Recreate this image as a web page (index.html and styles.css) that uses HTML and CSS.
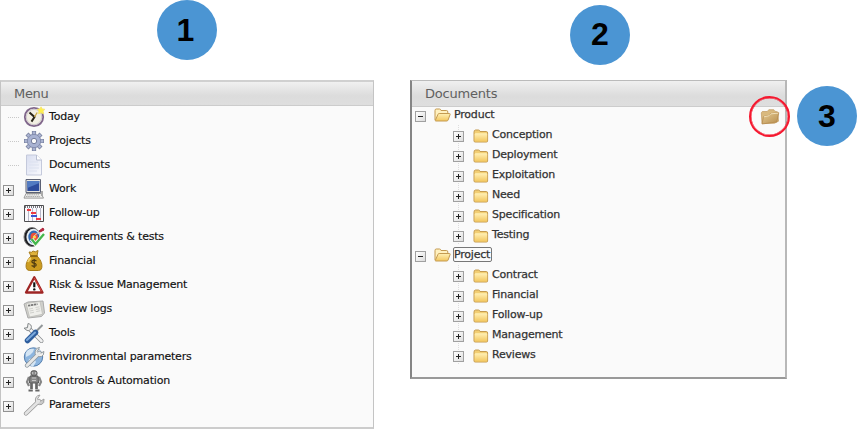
FILE: index.html
```html
<!DOCTYPE html>
<html lang="en">
<head>
<meta charset="utf-8">
<title>Menu and documents</title>
<link rel="stylesheet" href="styles.css">
</head>
<body>
<svg class="defs" aria-hidden="true">
  <defs>
    <linearGradient id="gold" x1="0" y1="0" x2="0" y2="1"><stop offset="0" stop-color="#fff0b5"/><stop offset="1" stop-color="#f3c75f"/></linearGradient>
    <linearGradient id="tan" x1="0" y1="0" x2="1" y2="1"><stop offset="0" stop-color="#e6cb93"/><stop offset="1" stop-color="#b68d4e"/></linearGradient>
    <linearGradient id="steel" x1="0" y1="0" x2="1" y2="1"><stop offset="0" stop-color="#f8f8f8"/><stop offset="1" stop-color="#b9b9b9"/></linearGradient>
    <linearGradient id="paper" x1="0" y1="0" x2="1" y2="1"><stop offset="0" stop-color="#d9def0"/><stop offset="1" stop-color="#f8f9fd"/></linearGradient>
    <symbol id="folder" viewBox="0 0 16 14"><path d="M1 3.2Q1 1 2.5 1h3q1.2 0 1.5 1.5h6.3q1.3 0 1.3 1.5v8q0 1-1.2 1H2.2Q1 13 1 12z" fill="#f2ce73" stroke="#c49a50"/><path d="M1.7 5.2q0-.9 1-.9h10.7q.8 0 .8.9v6.4q0 .9-.9.9H2.7q-1 0-1-.9z" fill="url(#gold)"/></symbol>
    <symbol id="folder-open" viewBox="0 0 17 14"><path d="M1 12V2.6Q1 1 2.2 1h3.3Q6.7 1 7 2.5h5.6q1.2 0 1.2 1.5v2" fill="#fff1c0" stroke="#c49a50"/><path d="M1.2 12.7 4 6.3q.3-.8 1.2-.8h10.2q1 0 .7 1l-2 5.5q-.4 1-1.3 1H1.8z" fill="url(#gold)" stroke="#c49a50"/></symbol>
  </defs>
</svg>
<main class="page">
  <section class="column column-menu">
    <div class="badge badge-one">1</div>
    <div class="panel panel-menu">
      <h2 class="panel-title">Menu</h2>
      <ul class="menu">
        <li><i class="dots"></i><svg viewBox="0 0 22 22"><circle cx="11" cy="11" r="9.2" fill="#f2efe2" stroke="#80668b" stroke-width="1.8"/><circle cx="11" cy="11" r="7.7" fill="none" stroke="#cfc8cd"/><path d="M6.5 6.5 11.5 11l-3 4.6" fill="none" stroke="#282419" stroke-width="2"/><path d="m11.5 11 2.7-4.5" stroke="#c8a642" stroke-width="1.3"/><path d="m18 .8 1.2 2.2 2.5.2-1.6 2 .6 2.5L18 6.8l-2.5.9.5-2.6-1.7-1.9 2.6-.2z" fill="#fff04b" stroke="#f6e56f" stroke-width=".9"/></svg><span>Today</span></li>
        <li><i class="dots"></i><svg viewBox="0 0 22 22"><g stroke="#747d9c" stroke-width="4.2"><path d="M11 1v20M1 11h20M4 4l14 14M18 4 4 18"/></g><g stroke="#acb5d2" stroke-width="2.8"><path d="M11 1.6v18.8M1.6 11h18.8M4.5 4.5l13 13M17.5 4.5l-13 13"/></g><circle cx="11" cy="11" r="6.7" fill="#a8b2d2" stroke="#838cad"/><circle cx="11" cy="11" r="2.7" fill="#fafafa" stroke="#747d9c"/></svg><span>Projects</span></li>
        <li><i class="dots"></i><svg viewBox="0 0 22 22"><path d="M3.5 1h10l5 5v15h-15z" fill="url(#paper)" stroke="#c4c9db"/><path d="M13.5 1v5h5" fill="#fff" stroke="#b9bfd2"/><path d="M6 8h9M6 11h10M6 14h10M6 17h8" stroke="#dce1ef"/></svg><span>Documents</span></li>
        <li><i class="toggle plus"></i><svg viewBox="0 0 22 22"><path d="M3 1.5h14.5V14.5H3z" fill="#e7e7e3" stroke="#5b6174"/><path d="M4.3 3h12v10h-12z" fill="#2d4c9d"/><path d="M4.3 3h12v2L4.3 10z" fill="#527bc2"/><path d="M3 15.5h15l2.5 4.6H1z" fill="#ededeb" stroke="#999"/><path d="M4 16.8h12M3 18.5h14" stroke="#aaa" stroke-dasharray="1.5 .7"/><path d="M19 13v5" stroke="#aaa" stroke-width="2"/></svg><span>Work</span></li>
        <li><i class="toggle plus"></i><svg viewBox="0 0 22 22"><path d="M1.5 3.5h19v16h-19z" fill="#f9f9fc" stroke="#4e4e50"/><path d="M2 5h18" stroke="#77777d" stroke-width="2" stroke-dasharray="1 1"/><path d="M5.5 6v13M9.5 6v13M13.5 6v13M17.5 6v13" stroke="#b8b8c8"/><path d="M4 8h4M8 11h5M13 17h5" stroke="#ee3c42" stroke-width="2"/><path d="M8 14h6" stroke="#3853d2" stroke-width="2"/></svg><span>Follow-up</span></li>
        <li><i class="toggle plus"></i><svg viewBox="0 0 22 22"><ellipse cx="9" cy="11" rx="8" ry="9.5" fill="#1c1c20" stroke="#777"/><ellipse cx="10.3" cy="11" rx="6.9" ry="8.2" fill="#e4edf3"/><ellipse cx="10.8" cy="11" rx="5.5" ry="6.5" fill="#326bb6"/><ellipse cx="11.2" cy="11" rx="3.7" ry="4.3" fill="#eb5039"/><circle cx="11.4" cy="11" r="1.6" fill="#ffd94e"/><path d="m11 10 6-5" stroke="#ccc" stroke-width="1"/><path d="m16 5 4-3 1 2-4 2z" fill="#be263e" stroke="#aa2037"/><path d="m8.5 13 4 5 8.5-10" fill="none" stroke="#f7fff4" stroke-width="4"/><path d="m8.5 13 4 5 8.5-10" fill="none" stroke="#44b64c" stroke-width="2.3"/></svg><span>Requirements &amp; tests</span></li>
        <li><i class="toggle plus"></i><svg viewBox="0 0 22 22"><path d="M8 6C5 9 2.5 13 3.2 17.5q.5 3 3.3 3h9q3 0 3.3-3C19.5 13 17 9 14 6z" fill="#cc9c20" stroke="#a77b18"/><path d="m8 6-2-4q3 1 4-1 2 2 5-.5L14 6z" fill="#dfb23b" stroke="#a77b18"/><path d="M5 12q1-3 3-4" fill="none" stroke="#efd06e" stroke-width="2"/><path d="M7.5 6h7" stroke="#805c12" stroke-width="1.5"/><path d="M13.5 11q-2.5-1.7-4.2-.3-1.3 1.7 1.5 2.5 3.4.8 2 2.6-1.9 1.4-4.2-.2M11.2 9v9" fill="none" stroke="#4e3b11" stroke-width="1.2"/></svg><span>Financial</span></li>
        <li><i class="toggle plus"></i><svg viewBox="0 0 22 22"><path d="M11.3 3.2 19.5 18.5H3z" fill="#fff" stroke="#9e2524" stroke-width="2.3" stroke-linejoin="round"/><path d="M11.3 4 18.7 17.3" stroke="#d84b42"/><path d="M11.3 8.3v5" stroke="#111" stroke-width="2.2"/><circle cx="11.3" cy="15.4" r="1.2" fill="#111"/></svg><span>Risk &amp; Issue Management</span></li>
        <li><i class="toggle plus"></i><svg viewBox="0 0 22 22"><path d="m1 6 4-2 15-1 1.5 12-3 3.5L5 20z" fill="#d1d1cc" stroke="#aaa"/><path d="m3.2 5.5 13.8-2 2.5 12.8-13 2.7z" fill="#efefeb" stroke="#b9b9b5" stroke-width=".7"/><path d="m5 7.7 9.5-1.6" stroke="#777" stroke-width="1.8" stroke-dasharray="2.4 .6"/><path d="m6 11 4-.7M6.5 13l4-.7M7 15l4-.7m1.5-4.8 4-.7m-3.6 2.7 4-.7m-3.6 2.7 4-.7" stroke="#d0d0cc"/></svg><span>Review logs</span></li>
        <li><i class="toggle plus"></i><svg viewBox="0 0 22 22"><path d="m5.5 6 13 13" stroke="#868a8d" stroke-width="4" stroke-linecap="round"/><path d="m5.5 6 13 13" stroke="#f1f1f1" stroke-width="2.6" stroke-linecap="round"/><path d="M5 1.5q4 1 3.3 4.2-1 3.5-4.2 2.8L1 6.2l3.5-.5z" fill="#f0f0ef" stroke="#85898b"/><path d="m19.5 3-8 8" stroke="#929799" stroke-width="2"/><path d="m12.5 10.5-8 8" stroke="#2e5d9d" stroke-width="5.5" stroke-linecap="round"/><path d="m12 10.5-8 7.5" stroke="#7ba9dc" stroke-width="2" stroke-linecap="round"/></svg><span>Tools</span></li>
        <li><i class="toggle plus"></i><svg viewBox="0 0 22 22"><circle cx="10.5" cy="11" r="9.2" fill="#8cb5df" stroke="#557ead"/><path d="M5 4q3-2 6-1l-1 3-3 3-4 2q-1-5 2-7m1 9 5-1 2 4-3 5-5-3zm7-11 5 3-2 4-4-2z" fill="#d4e5f4"/><path d="M4 19.5 16.5 7" stroke="#8c969d" stroke-width="4.2" stroke-linecap="round"/><path d="m16.5 1.5-2.3 4 2.1 2.5 4.6-2.5q.2 4-2.5 5-5 .8-6.3-3-.4-5.2 4.4-6" fill="#f0f0ef" stroke="#929a9e"/><path d="M4 19.5 16.5 7" stroke="#e7e8e7" stroke-width="2.8" stroke-linecap="round"/></svg><span>Environmental parameters</span></li>
        <li><i class="toggle plus"></i><svg viewBox="0 0 22 22"><path d="m6 7-2 5 2 4M16 7l2 5-2 4" fill="none" stroke="#858585" stroke-width="2.2"/><path d="M7 6h8l.5 7h-9z" fill="#888" stroke="#555"/><rect x="8" y=".8" width="6" height="5" rx="2" fill="#888" stroke="#555"/><path d="M9 3h1.2M12 3h1.2" stroke="#eee" stroke-width="1.2"/><path d="M8.5 13v6M13.5 13v6" stroke="#666" stroke-width="2.7"/><path d="M5.5 20.5h4.3M12.3 20.5h4.2" stroke="#666" stroke-width="2"/><path d="M9 8h4M9 10.5h4" stroke="#c5c5c5"/></svg><span>Controls &amp; Automation</span></li>
        <li><i class="toggle plus"></i><svg viewBox="0 0 22 22"><path d="M3 19.5 16 7" stroke="#989898" stroke-width="4.2" stroke-linecap="round"/><path d="m17 1-2.5 3.8 2.1 3L21 5q.5 4.3-2.3 5.5-5 .8-6.2-3Q11.6 1.9 17 1" fill="url(#steel)" stroke="#a0a0a0"/><path d="M3 19.5 16 7" stroke="#e3e3e3" stroke-width="2.8" stroke-linecap="round"/></svg><span>Parameters</span></li>
      </ul>
    </div>
  </section>
  <section class="column column-docs">
    <div class="badge badge-two">2</div>
    <div class="panel panel-docs">
      <h2 class="panel-title">Documents</h2>
      <ul class="tree">
        <li class="root"><i class="toggle minus"></i><svg><use href="#folder-open"/></svg><span>Product</span></li>
        <li><i class="toggle plus"></i><svg><use href="#folder"/></svg><span>Conception</span></li>
        <li><i class="toggle plus"></i><svg><use href="#folder"/></svg><span>Deployment</span></li>
        <li><i class="toggle plus"></i><svg><use href="#folder"/></svg><span>Exploitation</span></li>
        <li><i class="toggle plus"></i><svg><use href="#folder"/></svg><span>Need</span></li>
        <li><i class="toggle plus"></i><svg><use href="#folder"/></svg><span>Specification</span></li>
        <li><i class="toggle plus"></i><svg><use href="#folder"/></svg><span>Testing</span></li>
        <li class="root"><i class="toggle minus"></i><svg><use href="#folder-open"/></svg><span class="selected">Project</span></li>
        <li><i class="toggle plus"></i><svg><use href="#folder"/></svg><span>Contract</span></li>
        <li><i class="toggle plus"></i><svg><use href="#folder"/></svg><span>Financial</span></li>
        <li><i class="toggle plus"></i><svg><use href="#folder"/></svg><span>Follow-up</span></li>
        <li><i class="toggle plus"></i><svg><use href="#folder"/></svg><span>Management</span></li>
        <li><i class="toggle plus"></i><svg><use href="#folder"/></svg><span>Reviews</span></li>
      </ul>
      <div class="callout"><svg viewBox="0 0 20 18"><path d="M2 15.5 1.3 4.8l1-1.3h5l1.5-1.8h5l.9 1.5 3 .7.8 9.3-4 2z" fill="#d9b97e" stroke="#c09a5e" stroke-width=".7"/><path d="m2 16 1.5-7.5 5-1 2-2 8.3-.8-2 9.3z" fill="url(#tan)" stroke="#b18547" stroke-width=".7"/><path d="m3.8 8.8 5-1 2-2 7.4-.6" fill="none" stroke="#f0dfb8"/></svg></div>
    </div>
  </section>
  <div class="badge badge-three">3</div>
</main>
</body>
</html>
```
FILE: styles.css
```css
* { box-sizing: border-box; }
body { margin: 0; background: #fff; font: 11px "DejaVu Sans", sans-serif; overflow: hidden; }
.defs { position: absolute; width: 0; height: 0; }
.page { display: flex; align-items: flex-start; width: 857px; height: 429px; }
.column { display: flex; flex-direction: column; flex: none; height: 429px; }
.column-menu { width: 374px; margin-right: 36px; }
.column-docs { width: 377px; margin-right: 10px; }
.badge { display: flex; align-items: center; justify-content: center; flex: none; width: 60px; height: 60px; border-radius: 50%; background: #4b95d3; color: #000; font: bold 32px "Liberation Sans", sans-serif; }
.badge-one { margin: 0 0 20px 157px; padding-right: 3px; }
.badge-two { margin: 5px 0 15px 160px; padding-bottom: 2px; }
.badge-three { margin-top: 86px; }
.panel { border: 1px solid #c4c4c4; background: #fafafa; }
.panel-menu { height: 349px; border-top: 2px solid #d0d0d0; border-bottom: 2px solid #ccc; }
.panel-docs { position: relative; height: 299px; border-width: 1px 2px 2px; border-color: #bbb #b8b8b8 #999 #858585; }
.panel-title { height: 24px; margin: 0; padding-left: 13px; border-bottom: 1px solid #ccc; background: linear-gradient(#f0f0f0, #dcdcdc 60%, #dedede); color: #606060; font-size: 13px; font-weight: 400; line-height: 24px; letter-spacing: -.3px; }
.panel-docs .panel-title { height: 26px; line-height: 26px; letter-spacing: -.2px; }
ul { margin: 0; padding: 0; list-style: none; }
li { display: flex; align-items: center; white-space: nowrap; }
li span { margin-bottom: 1px; letter-spacing: -.2px; }
.menu { margin-top: -1px; }
.menu li { height: 24px; padding-left: 2px; }
.menu svg { flex: none; width: 22px; height: 22px; margin: 0 4px 0 9px; }
.menu span { color: #111; -webkit-text-stroke: .15px #111; }
.dots { width: 11px; flex: none; height: 1px; background: repeating-linear-gradient(90deg, #c8c8c8 0 1px, transparent 1px 2px); position: relative; left: 5px; }
.toggle { position: relative; flex: none; width: 11px; height: 11px; margin-top: 3px; border: 1px solid #929292; background: linear-gradient(135deg, #fff, #ddd); }
.toggle::before, .plus::after { content: ""; position: absolute; background: #222; left: 2px; top: 4px; width: 5px; height: 1px; }
.plus::after { left: 4px; top: 2px; width: 1px; height: 5px; }
.tree { margin-top: -2px; }
.tree li { height: 20px; padding-left: 41px; background: repeating-linear-gradient(#ddd 0 1px, transparent 1px 2px) 46px 0 / 1px 100% no-repeat; }
.tree li.root { padding-left: 3px; background: none; }
.tree .toggle { margin-top: 2px; border-color: #a0a0a0; }
.tree svg { flex: none; width: 16px; height: 14px; margin: 1px 3px 0 9px; }
.tree .root svg { width: 17px; margin: 0 3px 0 8px; }
.tree span { margin-bottom: 2px; color: #333; -webkit-text-stroke: .25px #333; }
.tree .selected { margin-right: 2px; padding-right: 1px; outline: 1px solid #777; border-radius: 1px; }
.callout { position: absolute; left: 337px; top: 15px; display: grid; place-items: center; width: 41px; height: 41px; border: 2px solid #f5182f; border-radius: 50%; box-shadow: inset 0 0 0 .5px #f5182f; }
.callout svg { width: 20px; height: 18px; }
```
